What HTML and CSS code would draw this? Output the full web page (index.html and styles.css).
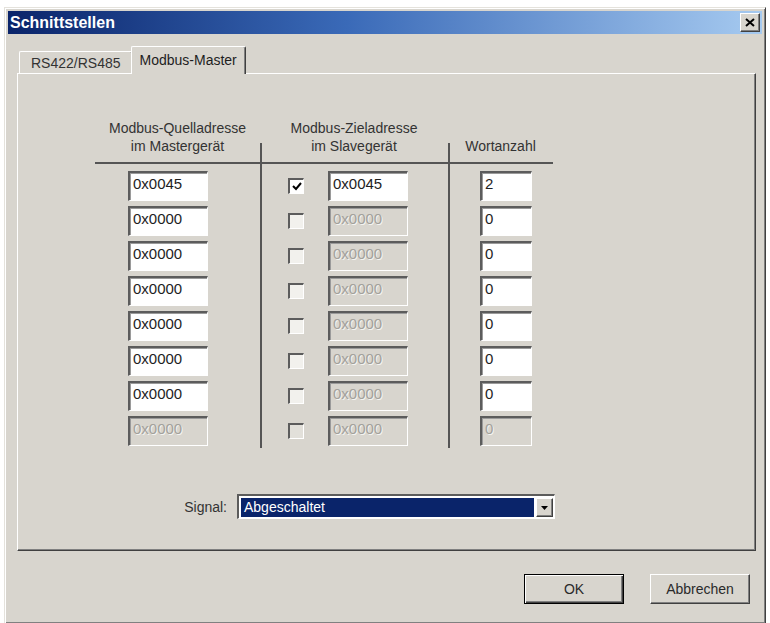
FILE: index.html
```html
<!DOCTYPE html>
<html lang="de">
<head>
    <meta charset="UTF-8">
    <meta name="viewport" content="width=device-width, initial-scale=1.0">
    <title>Schnittstellen</title>
    <link rel="stylesheet" href="styles.css">
</head>
<body>
    <div class="doc-strip"></div>
    <div class="window">
        <div class="titlebar">
            <span class="title">Schnittstellen</span>
            <span class="close-btn">
                <svg width="10" height="9" viewBox="0 0 10 9"><path d="M1 1 L9 8 M9 1 L1 8" stroke="#000" stroke-width="2"/></svg>
            </span>
        </div>
        <div class="dialog-body">
            <div class="tabs">
                <div class="tab">RS422/RS485</div>
                <div class="tab active">Modbus-Master</div>
            </div>
            <div class="pane">
                <div class="table">
                    <div class="head">Modbus-Quelladresse<br>im Mastergerät</div>
                    <div class="head line">Modbus-Zieladresse<br>im Slavegerät</div>
                    <div class="head line">Wortanzahl</div>

                    <div class="col col-src">
                        <input class="field" type="text" value="0x0045">
                        <input class="field" type="text" value="0x0000">
                        <input class="field" type="text" value="0x0000">
                        <input class="field" type="text" value="0x0000">
                        <input class="field" type="text" value="0x0000">
                        <input class="field" type="text" value="0x0000">
                        <input class="field" type="text" value="0x0000">
                        <input class="field" type="text" value="0x0000" disabled>
                    </div>

                    <div class="col col-dst line">
                        <div class="check-row">
                            <span class="check on"><svg width="10" height="9" viewBox="0 0 10 9"><path d="M1 4 L4 7 L9 1" fill="none" stroke="#000" stroke-width="2"/></svg></span>
                            <input class="field" type="text" value="0x0045">
                        </div>
                        <div class="check-row"><span class="check"></span><input class="field" type="text" value="0x0000" disabled></div>
                        <div class="check-row"><span class="check"></span><input class="field" type="text" value="0x0000" disabled></div>
                        <div class="check-row"><span class="check"></span><input class="field" type="text" value="0x0000" disabled></div>
                        <div class="check-row"><span class="check"></span><input class="field" type="text" value="0x0000" disabled></div>
                        <div class="check-row"><span class="check"></span><input class="field" type="text" value="0x0000" disabled></div>
                        <div class="check-row"><span class="check"></span><input class="field" type="text" value="0x0000" disabled></div>
                        <div class="check-row"><span class="check off"></span><input class="field" type="text" value="0x0000" disabled></div>
                    </div>

                    <div class="col col-cnt line">
                        <input class="field small" type="text" value="2">
                        <input class="field small" type="text" value="0">
                        <input class="field small" type="text" value="0">
                        <input class="field small" type="text" value="0">
                        <input class="field small" type="text" value="0">
                        <input class="field small" type="text" value="0">
                        <input class="field small" type="text" value="0">
                        <input class="field small" type="text" value="0" disabled>
                    </div>
                </div>

                <div class="signal-row">
                    <span class="signal-label">Signal:</span>
                    <div class="select">
                        <span class="select-value">Abgeschaltet</span>
                        <span class="select-btn">
                            <svg width="8" height="4" viewBox="0 0 8 4"><path d="M0 0 H7 L3.5 4 Z" fill="#000"/></svg>
                        </span>
                    </div>
                </div>
            </div>
            <div class="buttons">
                <button class="btn default">OK</button>
                <button class="btn">Abbrechen</button>
            </div>
        </div>
    </div>
</body>
</html>
```

FILE: styles.css
```css
body {
    margin: 0;
    background: #fff;
    font-family: 'Liberation Sans', Arial, sans-serif;
    font-size: 14px;
    color: #1e1e1e;
}

.doc-strip {
    height: 7px;
}

.window {
    width: 762px;
    margin-left: 4px;
    box-sizing: border-box;
    padding: 3px;
    background: #d8d5ce;
    border: 1px solid;
    border-color: #e4e2dc #404040 #404040 #e4e2dc;
    box-shadow: inset 1px 1px #fff, inset -1px -1px #808080;
}

.titlebar {
    height: 23px;
    display: flex;
    align-items: center;
    justify-content: space-between;
    padding: 0 2px;
    background: linear-gradient(to right, #0a246a, #3a6ab8 45%, #a6caf0);
}
.title {
    font-weight: bold;
    font-size: 16px;
    color: #fff;
}
.close-btn {
    width: 20px;
    height: 19px;
    box-sizing: border-box;
    display: flex;
    align-items: center;
    justify-content: center;
    background: #d8d5ce;
    border: 1px solid;
    border-color: #fff #404040 #404040 #fff;
    box-shadow: inset -1px -1px #808080;
}

.dialog-body {
    padding: 12px 6px 16px 9px;
}

.tabs {
    display: flex;
    align-items: flex-end;
    height: 27px;
    padding-left: 2px;
}
.tab {
    height: 22px;
    box-sizing: border-box;
    padding: 3px 11px 0 11px;
    border: 1px solid;
    border-color: #fff #404040 transparent #fff;
    border-bottom: none;
    border-radius: 2px 2px 0 0;
    box-shadow: inset -1px 0 #808080;
    line-height: 17px;
    white-space: nowrap;
    color: #333;
}
.tab.active {
    height: 28px;
    padding: 5px 8px 0 8px;
    margin-left: -2px;
    margin-bottom: -1px;
    background: #d8d5ce;
    color: #1e1e1e;
    position: relative;
    z-index: 1;
}

.pane {
    height: 478px;
    box-sizing: border-box;
    padding-top: 46px;
    border: 1px solid;
    border-color: #fff #404040 #404040 #fff;
    box-shadow: inset -1px -1px #808080;
}

.table {
    display: grid;
    grid-template-columns: 165px 188px 105px;
    margin-left: 77px;
    width: 458px;
}
.head {
    height: 44px;
    box-sizing: border-box;
    display: flex;
    align-items: flex-end;
    justify-content: center;
    text-align: center;
    line-height: 18px;
    padding-bottom: 7px;
    border-bottom: 2px solid #555;
    color: #333;
}
.head.line {
    background: linear-gradient(#555, #555) no-repeat 0 23px / 2px 100%;
}

.col {
    display: flex;
    flex-direction: column;
    gap: 5px;
    padding: 7px 0 2px 33px;
}
.col.line {
    border-left: 2px solid #555;
}
.col-dst {
    padding-left: 26px;
}
.col-cnt {
    padding-left: 30px;
}

.field {
    width: 80px;
    height: 30px;
    box-sizing: border-box;
    margin: 0;
    padding: 2px 0 8px 3px;
    font-family: inherit;
    font-size: 15px;
    color: #1e1e1e;
    background: #fff;
    border: solid;
    border-width: 2px 1px 1px 2px;
    border-color: #5c5c5c #fff #fff #5c5c5c;
    box-shadow: inset 1px 1px #9a9a9a;
    outline: none;
}
.field.small {
    width: 52px;
}
.field:disabled {
    background: #d8d5ce;
    color: #a3a19b;
    text-shadow: 1px 1px #f4f3ef;
}

.check-row {
    display: flex;
    align-items: center;
    gap: 24px;
}
.check {
    width: 16px;
    height: 16px;
    box-sizing: border-box;
    display: flex;
    align-items: center;
    justify-content: center;
    background: #f2f1ed;
    border: solid;
    border-width: 2px 1px 1px 2px;
    border-color: #5c5c5c #fff #fff #5c5c5c;
}
.check.on {
    background: #fff;
}
.check.off {
    background: #e2e0da;
}

.signal-row {
    display: flex;
    align-items: center;
    gap: 10px;
    margin: 46px 0 0 164px;
}
.signal-label {
    width: 45px;
    text-align: right;
    color: #333;
}
.select {
    width: 318px;
    height: 25px;
    box-sizing: border-box;
    display: flex;
    padding: 2px 1px 1px 2px;
    background: #fff;
    border: solid;
    border-width: 2px 1px 1px 2px;
    border-color: #5c5c5c #fff #fff #5c5c5c;
}
.select-value {
    flex: 1;
    background: #0a246a;
    color: #fff;
    padding-left: 3px;
    line-height: 18px;
}
.select-btn {
    width: 17px;
    margin-left: 2px;
    box-sizing: border-box;
    display: flex;
    align-items: center;
    justify-content: center;
    background: #d8d5ce;
    border: 1px solid;
    border-color: #fff #404040 #404040 #fff;
    box-shadow: inset -1px -1px #808080;
}

.buttons {
    display: flex;
    justify-content: flex-end;
    gap: 26px;
    margin-top: 23px;
    padding-right: 6px;
}
.btn {
    width: 100px;
    height: 30px;
    font-family: inherit;
    font-size: 14px;
    color: #2a2a2a;
    background: #d8d5ce;
    border: 1px solid;
    border-color: #fff #404040 #404040 #fff;
    box-shadow: inset -1px -1px #808080;
}
.btn.default {
    border-color: #000;
    box-shadow: inset 1px 1px #fff, inset -1px -1px #404040, inset -2px -2px #808080;
}
```
